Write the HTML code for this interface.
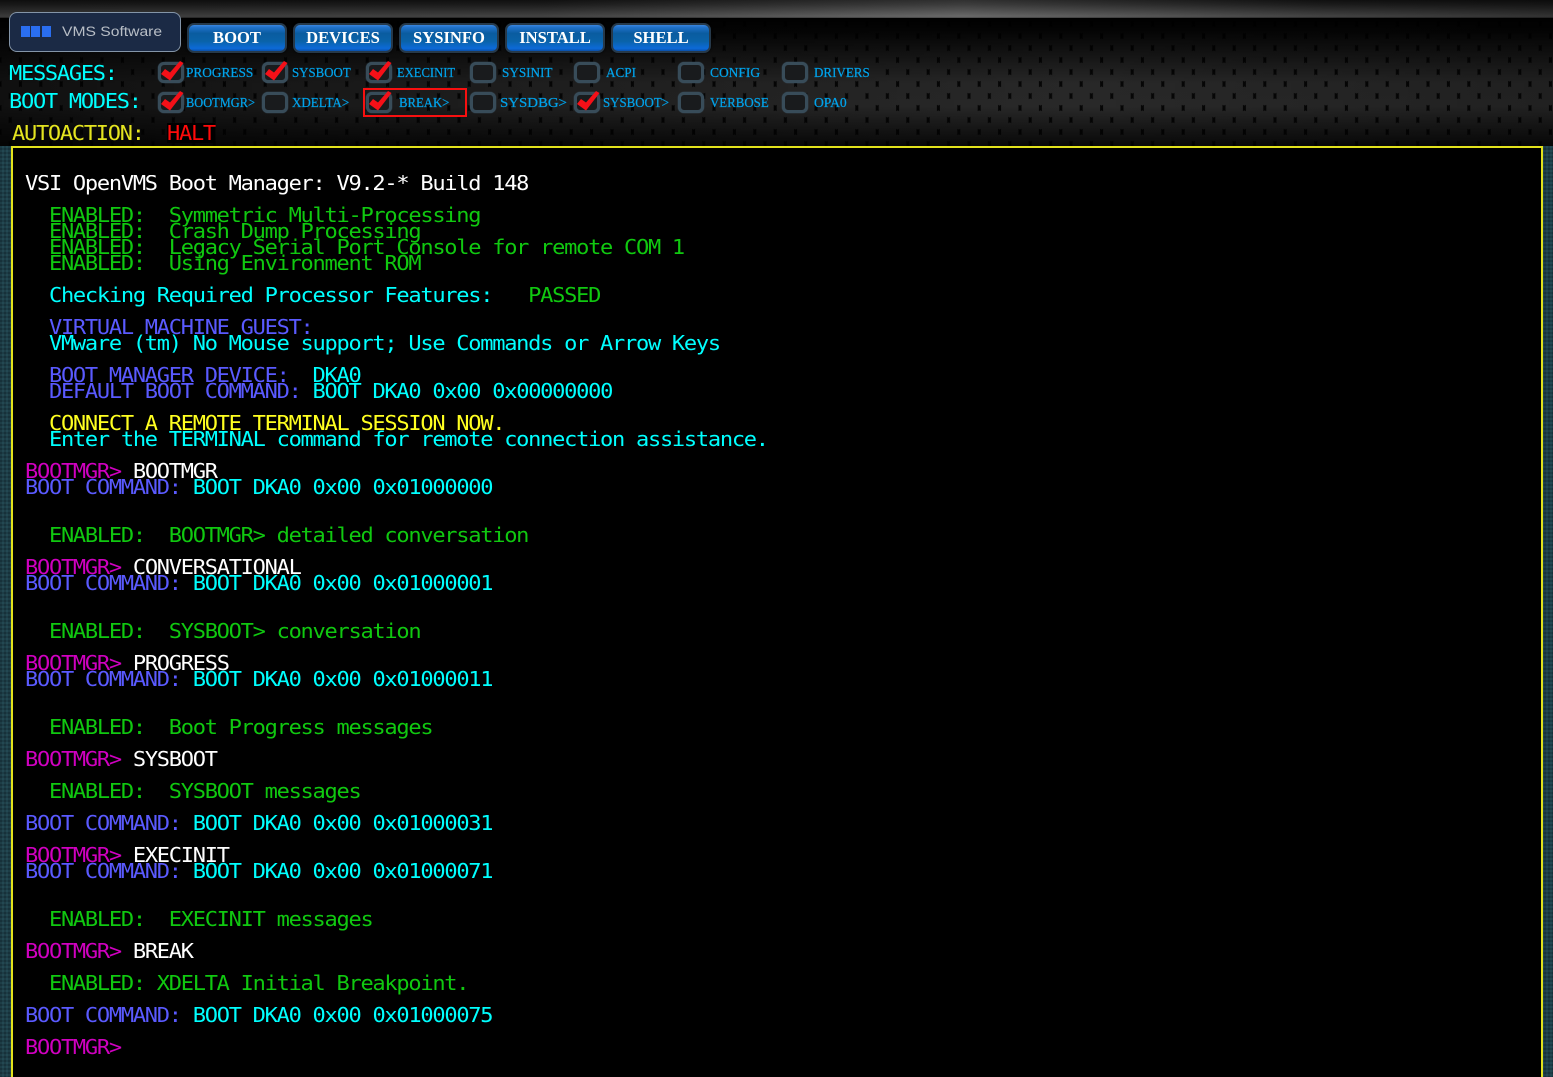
<!DOCTYPE html>
<html>
<head>
<meta charset="utf-8">
<style>
html,body{margin:0;padding:0;background:#000;width:1553px;height:1077px;overflow:hidden;}
body{position:relative;}
.abs{position:absolute;}
#top{left:0;top:0;width:1553px;height:18px;background:linear-gradient(180deg,#141414 0,#222 25%,#444 70%,#555 92%,#2a2a2a 100%);}
#topov{left:0;top:0;width:1553px;height:18px;background:linear-gradient(90deg,rgba(0,0,0,.3) 0,rgba(0,0,0,.2) 35%,rgba(255,255,255,.12) 62%,rgba(0,0,0,.2) 85%,rgba(0,0,0,.4) 100%);}
#logo{left:9px;top:12px;width:170px;height:38px;border:1px solid #8495a8;border-radius:8px;background:#1b2a45;}
.sq{position:absolute;top:26px;width:9px;height:11px;background:#2a6ef0;}
#logot{left:62px;top:23px;font:13.5px/17px "Liberation Sans",sans-serif;color:#b8bec6;transform:scaleX(1.16);transform-origin:0 0;white-space:pre;}
.btn{position:absolute;top:23px;width:96px;height:26px;border:2px solid #26394a;border-radius:7px;box-shadow:0 0 2px #000;background:linear-gradient(180deg,#3a86e0 0,#1f70c8 10%,#0a5ca0 32%,#0a62a8 62%,#0c6ad8 90%,#0a4fa8 100%);color:#fff;font:bold 16.6px/26px "Liberation Serif",serif;text-align:center;}
.cb{position:absolute;width:20px;height:15px;border:3px solid #384c59;border-radius:6px;background:#191b1d;box-shadow:0 0 1px #4a6a80;}
.ck{position:absolute;}
.lb{position:absolute;font:14px/16px "Liberation Serif",serif;color:#00a2ea;white-space:pre;transform-origin:0 0;-webkit-text-stroke:.25px #00a2ea;}
.hd{position:absolute;font:20px/20px "DejaVu Sans Mono","Liberation Mono",monospace;white-space:pre;letter-spacing:-1.16px;transform:scaleX(1.1);transform-origin:0 0;}
#red{left:363px;top:88px;width:100px;height:25px;border:2px solid #f81010;}
#term{left:11px;top:146px;width:1528px;height:935px;border:2px solid #e2e21c;border-bottom:0;background:#000;}
#out{position:absolute;left:25px;top:175px;margin:0;font:20px/16px "DejaVu Sans Mono","Liberation Mono",monospace;letter-spacing:-1.15px;transform:scaleX(1.1);transform-origin:0 0;color:#0c0;white-space:pre;height:890px;overflow:hidden;}
.w{color:#fff}.g{color:#10c810}.c{color:#00ffff}.b{color:#5a5aff}.y{color:#ffff20}.m{color:#d000c0}
</style>
</head>
<body>
<svg class="abs" style="left:0;top:0" width="1553" height="1077">
<defs>
<pattern id="hex" width="20.4" height="24" patternUnits="userSpaceOnUse">
<rect width="20.4" height="24" fill="#060606"/>
<g fill="#2b2b2b">
<polygon points="10.2,2.4 18.9,7.6 18.9,16.4 10.2,21.6 1.5,16.4 1.5,7.6" />
<polygon points="0,-9.6 8.7,-4.4 8.7,4.4 0,9.6 -8.7,4.4 -8.7,-4.4" />
<polygon points="20.4,-9.6 29.1,-4.4 29.1,4.4 20.4,9.6 11.7,4.4 11.7,-4.4" />
<polygon points="0,14.4 8.7,19.6 8.7,28.4 0,33.6 -8.7,28.4 -8.7,19.6" />
<polygon points="20.4,14.4 29.1,19.6 29.1,28.4 20.4,33.6 11.7,28.4 11.7,19.6" />
</g>
</pattern>
<linearGradient id="v" x1="0" y1="0" x2="0" y2="1">
<stop offset="0" stop-color="#000" stop-opacity="1"/>
<stop offset=".1" stop-color="#000" stop-opacity=".9"/>
<stop offset=".5" stop-color="#000" stop-opacity=".08"/>
<stop offset=".68" stop-color="#000" stop-opacity=".05"/>
<stop offset="1" stop-color="#000" stop-opacity=".85"/>
</linearGradient>
<linearGradient id="h" x1="0" y1="0" x2="1" y2="0">
<stop offset="0" stop-color="#000" stop-opacity=".6"/>
<stop offset=".35" stop-color="#000" stop-opacity=".25"/>
<stop offset=".7" stop-color="#000" stop-opacity="0"/>
<stop offset="1" stop-color="#000" stop-opacity=".2"/>
</linearGradient>
<pattern id="teal" width="4" height="4" patternUnits="userSpaceOnUse">
<rect width="4" height="4" fill="#1d3d46"/>
<rect width="2" height="2" fill="#17313a"/>
<rect x="2" y="2" width="2" height="2" fill="#234852"/>
</pattern>
</defs>
<rect x="0" y="18" width="1553" height="130" fill="url(#hex)"/>
<rect x="0" y="18" width="1553" height="130" fill="url(#v)"/>
<rect x="0" y="18" width="1553" height="130" fill="url(#h)"/>
<rect x="0" y="146" width="11" height="931" fill="url(#teal)"/>
<rect x="1543" y="146" width="10" height="931" fill="url(#teal)"/>
</svg>

<div id="top" class="abs"></div><div id="topov" class="abs"></div>

<div id="logo" class="abs"></div>
<div class="sq" style="left:21px"></div><div class="sq" style="left:31px"></div><div class="sq" style="left:42px"></div>
<div id="logot" class="abs">VMS Software</div>

<div class="btn" style="left:187px">BOOT</div>
<div class="btn" style="left:293px">DEVICES</div>
<div class="btn" style="left:399px">SYSINFO</div>
<div class="btn" style="left:505px">INSTALL</div>
<div class="btn" style="left:611px">SHELL</div>

<div class="hd" style="left:9px;top:63px;color:#00ffff">MESSAGES:</div>
<div class="hd" style="left:9px;top:91px;color:#00ffff">BOOT MODES:</div>
<div class="hd" style="left:12px;top:123px;color:#e4e420">AUTOACTION:</div>
<div class="hd" style="left:167px;top:123px;color:#ff0a0a;background:#000">HALT</div>

<div class="cb" style="left:158px;top:62px"></div>
<div class="cb" style="left:262px;top:62px"></div>
<div class="cb" style="left:366px;top:62px"></div>
<div class="cb" style="left:470px;top:62px"></div>
<div class="cb" style="left:574px;top:62px"></div>
<div class="cb" style="left:678px;top:62px"></div>
<div class="cb" style="left:782px;top:62px"></div>
<div class="cb" style="left:158px;top:92px"></div>
<div class="cb" style="left:262px;top:92px"></div>
<div class="cb" style="left:366px;top:92px"></div>
<div class="cb" style="left:470px;top:92px"></div>
<div class="cb" style="left:574px;top:92px"></div>
<div class="cb" style="left:678px;top:92px"></div>
<div class="cb" style="left:782px;top:92px"></div>

<svg class="ck" style="left:158px;top:60px" width="28" height="24"><path d="M3 14L7 9L12 12.5L22 1L25.5 3L12 20.5Z" fill="#f41018"/></svg>
<svg class="ck" style="left:262px;top:60px" width="28" height="24"><path d="M3 14L7 9L12 12.5L22 1L25.5 3L12 20.5Z" fill="#f41018"/></svg>
<svg class="ck" style="left:366px;top:60px" width="28" height="24"><path d="M3 14L7 9L12 12.5L22 1L25.5 3L12 20.5Z" fill="#f41018"/></svg>
<svg class="ck" style="left:158px;top:90px" width="28" height="24"><path d="M3 14L7 9L12 12.5L22 1L25.5 3L12 20.5Z" fill="#f41018"/></svg>
<svg class="ck" style="left:366px;top:90px" width="28" height="24"><path d="M3 14L7 9L12 12.5L22 1L25.5 3L12 20.5Z" fill="#f41018"/></svg>
<svg class="ck" style="left:574px;top:90px" width="28" height="24"><path d="M3 14L7 9L12 12.5L22 1L25.5 3L12 20.5Z" fill="#f41018"/></svg>

<div class="lb" style="left:186px;top:66px;transform:scaleX(.95)">PROGRESS</div>
<div class="lb" style="left:292px;top:66px;transform:scaleX(.92)">SYSBOOT</div>
<div class="lb" style="left:397px;top:66px;transform:scaleX(.9)">EXECINIT</div>
<div class="lb" style="left:502px;top:66px;transform:scaleX(.94)">SYSINIT</div>
<div class="lb" style="left:606px;top:66px;transform:scaleX(.94)">ACPI</div>
<div class="lb" style="left:710px;top:66px;transform:scaleX(.96)">CONFIG</div>
<div class="lb" style="left:814px;top:66px;transform:scaleX(.93)">DRIVERS</div>
<div class="lb" style="left:186px;top:96px;transform:scaleX(.885)">BOOTMGR&gt;</div>
<div class="lb" style="left:292px;top:96px;transform:scaleX(.93)">XDELTA&gt;</div>
<div class="lb" style="left:399px;top:96px;transform:scaleX(.91)">BREAK&gt;</div>
<div class="lb" style="left:500px;top:96px;transform:scaleX(1.06)">SYSDBG&gt;</div>
<div class="lb" style="left:603px;top:96px;transform:scaleX(.92)">SYSBOOT&gt;</div>
<div class="lb" style="left:710px;top:96px;transform:scaleX(.92)">VERBOSE</div>
<div class="lb" style="left:814px;top:96px;transform:scaleX(.97)">OPA0</div>
<div id="red" class="abs"></div>

<div id="term" class="abs"></div>
<pre id="out"><span class="w">VSI OpenVMS Boot Manager: V9.2-* Build 148</span>

<span class="g">  ENABLED:  Symmetric Multi-Processing
  ENABLED:  Crash Dump Processing
  ENABLED:  Legacy Serial Port Console for remote COM 1
  ENABLED:  Using Environment ROM</span>

<span class="c">  Checking Required Processor Features:</span><span class="g">   PASSED</span>

<span class="b">  VIRTUAL MACHINE GUEST:</span>
<span class="c">  VMware (tm) No Mouse support; Use Commands or Arrow Keys</span>

<span class="b">  BOOT MANAGER DEVICE:</span>  <span class="c">DKA0</span>
<span class="b">  DEFAULT BOOT COMMAND:</span> <span class="c">BOOT DKA0 0x00 0x00000000</span>

<span class="y">  CONNECT A REMOTE TERMINAL SESSION NOW.</span>
<span class="c">  Enter the TERMINAL command for remote connection assistance.</span>

<span class="m">BOOTMGR&gt;</span> <span class="w">BOOTMGR</span>
<span class="b">BOOT COMMAND:</span> <span class="c">BOOT DKA0 0x00 0x01000000</span>


<span class="g">  ENABLED:  BOOTMGR&gt; detailed conversation</span>

<span class="m">BOOTMGR&gt;</span> <span class="w">CONVERSATIONAL</span>
<span class="b">BOOT COMMAND:</span> <span class="c">BOOT DKA0 0x00 0x01000001</span>


<span class="g">  ENABLED:  SYSBOOT&gt; conversation</span>

<span class="m">BOOTMGR&gt;</span> <span class="w">PROGRESS</span>
<span class="b">BOOT COMMAND:</span> <span class="c">BOOT DKA0 0x00 0x01000011</span>


<span class="g">  ENABLED:  Boot Progress messages</span>

<span class="m">BOOTMGR&gt;</span> <span class="w">SYSBOOT</span>

<span class="g">  ENABLED:  SYSBOOT messages</span>

<span class="b">BOOT COMMAND:</span> <span class="c">BOOT DKA0 0x00 0x01000031</span>

<span class="m">BOOTMGR&gt;</span> <span class="w">EXECINIT</span>
<span class="b">BOOT COMMAND:</span> <span class="c">BOOT DKA0 0x00 0x01000071</span>


<span class="g">  ENABLED:  EXECINIT messages</span>

<span class="m">BOOTMGR&gt;</span> <span class="w">BREAK</span>

<span class="g">  ENABLED: XDELTA Initial Breakpoint.</span>

<span class="b">BOOT COMMAND:</span> <span class="c">BOOT DKA0 0x00 0x01000075</span>

<span class="m">BOOTMGR&gt;</span></pre>
</body>
</html>
